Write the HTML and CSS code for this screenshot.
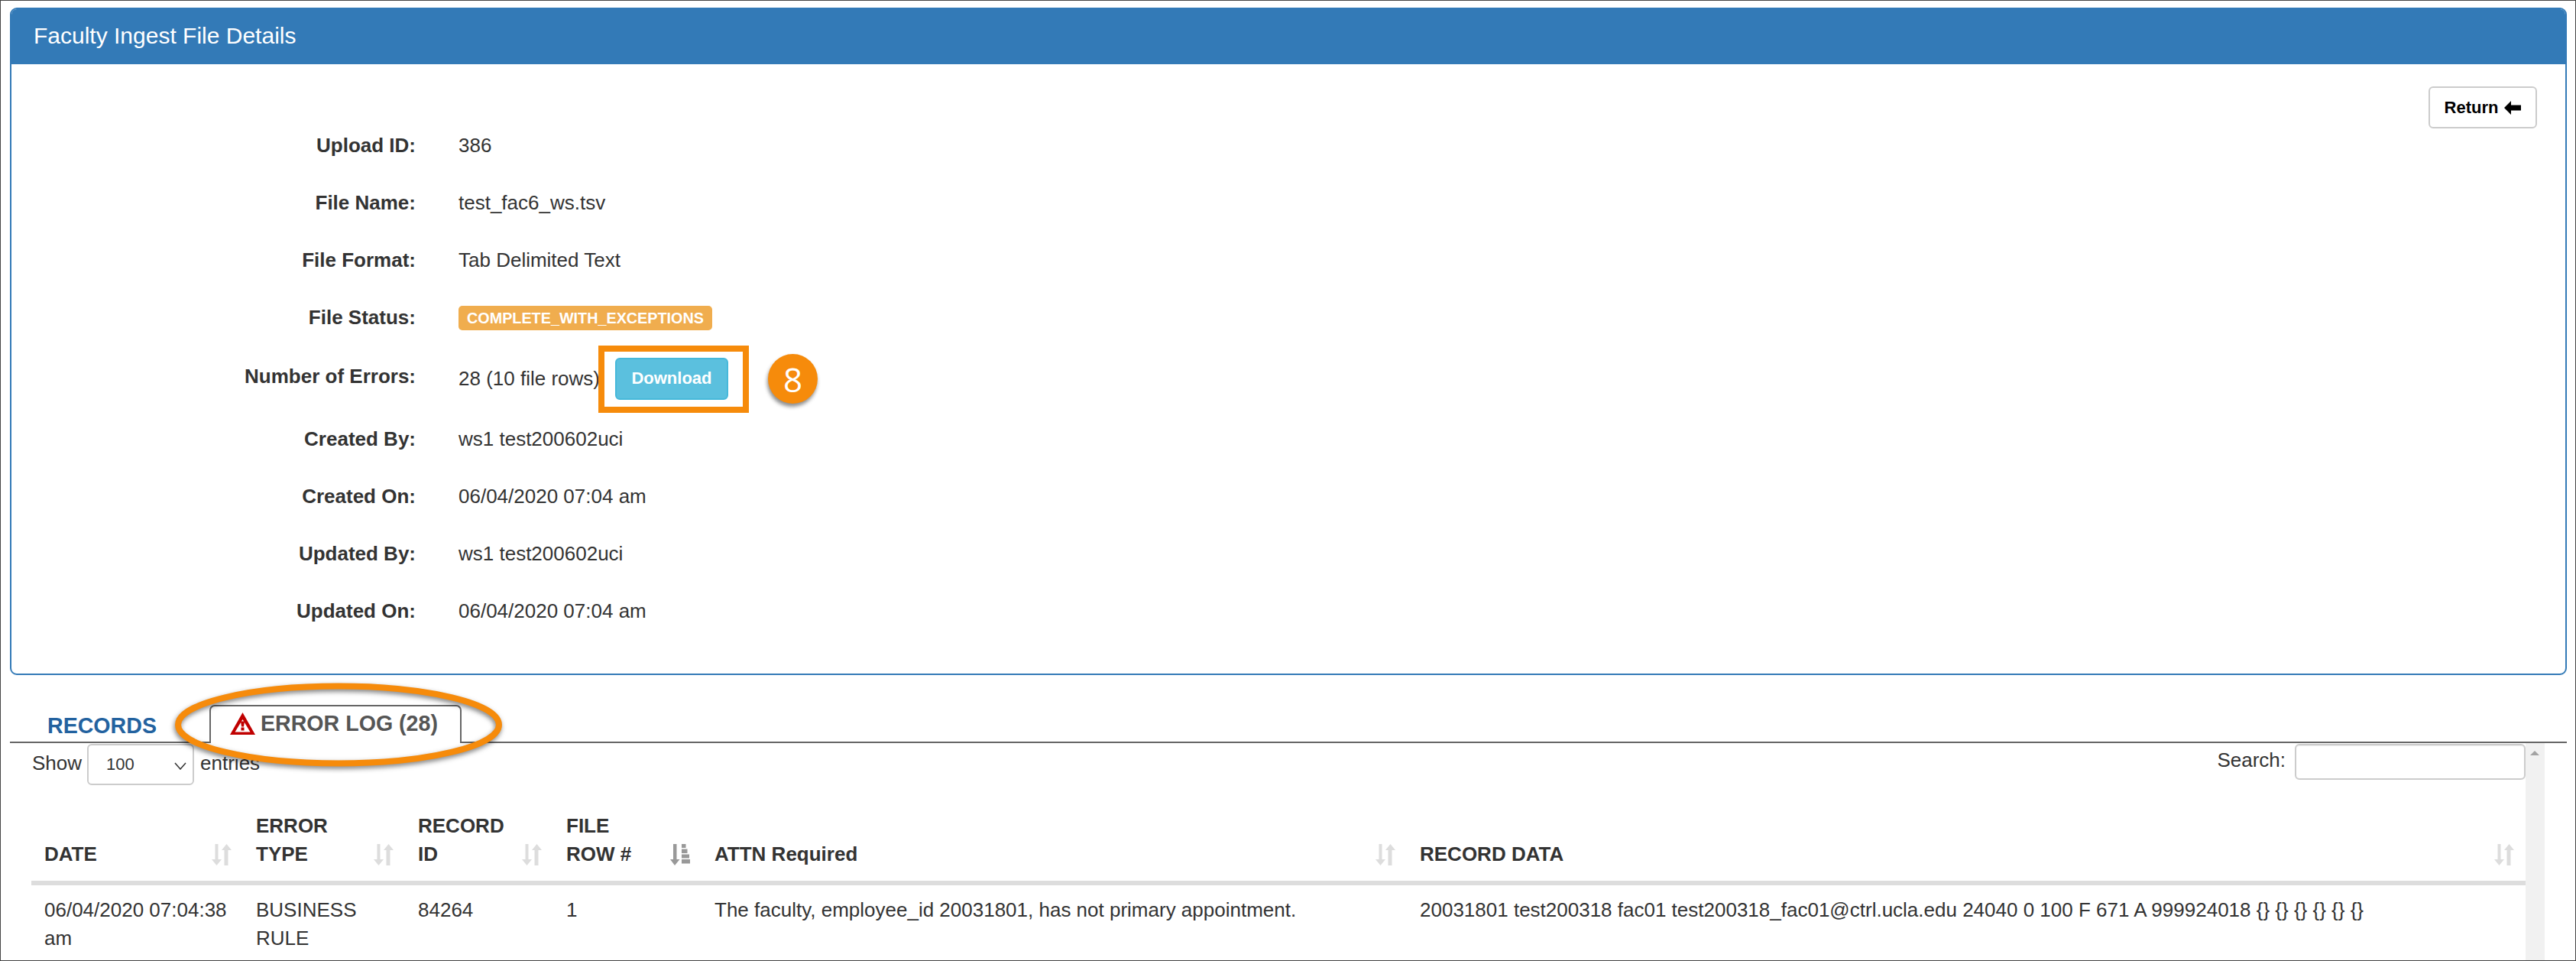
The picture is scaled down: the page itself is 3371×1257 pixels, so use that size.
FILE: index.html
```html
<!DOCTYPE html>
<html lang="en">
<head>
<meta charset="utf-8">
<title>Faculty Ingest File Details</title>
<link rel="stylesheet" href="styles.css">
</head>
<body>
<div class="frame">
  <section class="panel">
    <h1 class="panel-heading">Faculty Ingest File Details</h1>
    <div class="panel-body">
      <div class="details">
        <div class="row"><div class="label">Upload ID:</div><div class="value">386</div></div>
        <div class="row"><div class="label">File Name:</div><div class="value">test_fac6_ws.tsv</div></div>
        <div class="row"><div class="label">File Format:</div><div class="value">Tab Delimited Text</div></div>
        <div class="row"><div class="label">File Status:</div><div class="value"><span class="badge">COMPLETE_WITH_EXCEPTIONS</span></div></div>
        <div class="row row-errors"><div class="label label-up">Number of Errors:</div><div class="value value-flex">28 (10 file rows)<button class="btn-download">Download</button></div></div>
        <div class="row"><div class="label">Created By:</div><div class="value">ws1 test200602uci</div></div>
        <div class="row"><div class="label">Created On:</div><div class="value">06/04/2020 07:04 am</div></div>
        <div class="row"><div class="label">Updated By:</div><div class="value">ws1 test200602uci</div></div>
        <div class="row"><div class="label">Updated On:</div><div class="value">06/04/2020 07:04 am</div></div>
      </div>
      <button class="btn-return">Return
        <svg class="arrow" viewBox="0 0 22 18"><path d="M0 9 9 0v5.500h13v7H9V18z"/></svg>
      </button>
    </div>
  </section>

  <nav class="tabs">
    <a class="tab-link">RECORDS</a>
    <a class="tab-active">
      <svg class="warn" viewBox="0 0 33 29"><path d="M16.500 0 33 29H0z" fill="#c00000"/><path d="M16.500 9 26.500 25.500H6.500z" fill="#fff"/><path d="M14 11.500h5l-1 7h-3z" fill="#c00000"/><rect x="14.500" y="19.500" width="4" height="4" fill="#c00000"/></svg>
      ERROR LOG (28)
    </a>
  </nav>

  <div class="lower">
    <div class="content">
      <div class="controls">
        <div class="length">
          <span>Show</span>
          <div class="select"><span>100</span>
            <svg class="chev" viewBox="0 0 16 10"><path d="M1 1l7 8 7-8" fill="none" stroke="#333" stroke-width="1.500"/></svg>
          </div>
          <span>entries</span>
        </div>
        <label class="search">Search:<input class="search-input" type="text"></label>
      </div>
      <table class="grid">
        <colgroup>
          <col class="c1"><col class="c2"><col class="c3"><col class="c4"><col class="c5"><col class="c6">
        </colgroup>
        <thead>
          <tr>
            <th><div class="th"><span>DATE</span><svg class="sort" viewBox="0 0 26 28"><path d="M4.500 0h4v20H13l-6.500 8L0 20h4.500zM19.500 0 26 8h-4.500v20h-5V8H13z"/></svg></div></th>
            <th><div class="th"><span>ERROR<br>TYPE</span><svg class="sort" viewBox="0 0 26 28"><path d="M4.500 0h4v20H13l-6.500 8L0 20h4.500zM19.500 0 26 8h-4.500v20h-5V8H13z"/></svg></div></th>
            <th><div class="th"><span>RECORD<br>ID</span><svg class="sort" viewBox="0 0 26 28"><path d="M4.500 0h4v20H13l-6.500 8L0 20h4.500zM19.500 0 26 8h-4.500v20h-5V8H13z"/></svg></div></th>
            <th><div class="th"><span>FILE<br>ROW #</span><svg class="sort sort-on" viewBox="0 0 26 28"><path d="M4 0h4.500v20H12.500l-6.500 8L0 20h4zM15 0h5.500v5H15zM15 6.500h7.500V12H15zM15 13.500h10V18.500H15zM15 20h12v5.500H15z"/></svg></div></th>
            <th><div class="th"><span>ATTN Required</span><svg class="sort" viewBox="0 0 26 28"><path d="M4.500 0h4v20H13l-6.500 8L0 20h4.500zM19.500 0 26 8h-4.500v20h-5V8H13z"/></svg></div></th>
            <th><div class="th"><span>RECORD DATA</span><svg class="sort" viewBox="0 0 26 28"><path d="M4.500 0h4v20H13l-6.500 8L0 20h4.500zM19.500 0 26 8h-4.500v20h-5V8H13z"/></svg></div></th>
          </tr>
        </thead>
        <tbody>
          <tr>
            <td>06/04/2020 07:04:38 am</td>
            <td>BUSINESS RULE</td>
            <td>84264</td>
            <td>1</td>
            <td>The faculty, employee_id 20031801, has not primary appointment.</td>
            <td>20031801 test200318 fac01 test200318_fac01@ctrl.ucla.edu 24040 0 100 F 671 A 999924018 {} {} {} {} {} {}</td>
          </tr>
        </tbody>
      </table>
    </div>
    <div class="scrollbar"><span class="scroll-up"></span></div>
  </div>

  <div class="note-box"></div>
  <div class="note-num">8</div>
  <svg class="note-ring" viewBox="0 0 450 130"><ellipse cx="225" cy="60" rx="210" ry="50.500" fill="none" stroke="#f68b0b" stroke-width="8"/></svg>
</div>
</body>
</html>
```

FILE: styles.css
```css
* { box-sizing: border-box; }
html, body { margin: 0; padding: 0; }
body {
  font-family: "Liberation Sans", Arial, sans-serif;
  font-size: 26px;
  color: #333;
  background: #fff;
}
.frame {
  position: relative;
  width: 3371px;
  height: 1257px;
  overflow: hidden;
  border: 1px solid #444;
  padding: 9px 11px 0 12px;
}
.panel {
  border: 2px solid #337ab7;
  border-radius: 9px;
  height: 873px;
  overflow: hidden;
}
.panel-heading {
  margin: -2px -2px 0;
  height: 74px;
  padding-left: 31px;
  display: flex;
  align-items: center;
  background: #337ab7;
  color: #fff;
  font-size: 30px;
  font-weight: 400;
}
.panel-body {
  display: flex;
  justify-content: space-between;
  align-items: flex-start;
  padding: 29px 37px 0 0;
}
.details { padding-top: 40px; }
.row {
  display: flex;
  align-items: center;
  height: 75px;
}
.row-errors { height: 84px; }
.label {
  width: 529px;
  text-align: right;
  font-weight: 700;
  margin-right: 56px;
}
.label-up { margin-bottom: 6px; }
.value-flex { display: flex; align-items: center; }
.badge {
  display: inline-block;
  background: #f0ad4e;
  color: #fff;
  font-size: 19.800px;
  font-weight: 700;
  line-height: 32px;
  height: 32px;
  padding: 0 11px;
  border-radius: 5px;
}
.btn-download {
  width: 148px;
  height: 55px;
  margin-left: 20px;
  padding: 0;
  background: #5bc0de;
  border: 2px solid #46b8da;
  border-radius: 6px;
  color: #fff;
  font: 700 22px "Liberation Sans", Arial, sans-serif;
}
.btn-return {
  display: flex;
  align-items: center;
  justify-content: center;
  gap: 8px;
  width: 142px;
  height: 55px;
  padding: 0;
  background: #fff;
  border: 2px solid #ccc;
  border-radius: 6px;
  color: #000;
  font: 700 22px "Liberation Sans", Arial, sans-serif;
}
.arrow { width: 22px; height: 18px; fill: #000; }

.tabs {
  display: flex;
  height: 50px;
  margin-top: 39px;
  border-bottom: 2px solid #666;
  font-size: 28.600px;
  font-weight: 700;
}
.tab-link {
  padding-left: 49px;
  margin-right: 69px;
  padding-top: 11px;
  color: #23629f;
}
.tab-active {
  display: flex;
  align-items: center;
  gap: 7px;
  width: 330px;
  height: 50px;
  padding: 0 0 4px 25px;
  background: #fff;
  border: 2px solid #666;
  border-bottom: 0;
  border-radius: 7px 7px 0 0;
  color: #555;
}
.warn { width: 33px; height: 29px; }

.lower {
  display: flex;
  height: 286px;
  padding-left: 28px;
}
.content { width: 3264px; }
.scrollbar {
  position: relative;
  width: 25px;
  background: #f1f1f1;
}
.scroll-up {
  display: block;
  width: 0;
  margin: 10px 0 0 6px;
  border-left: 6.500px solid transparent;
  border-right: 6.500px solid transparent;
  border-bottom: 6px solid #a3a3a3;
}
.controls {
  display: flex;
  justify-content: space-between;
  align-items: flex-start;
  height: 74px;
  padding-top: 1px;
}
.length {
  display: flex;
  align-items: center;
  height: 54px;
  padding-left: 1px;
}
.length > span { position: relative; bottom: 2px; }
.select {
  display: flex;
  align-items: center;
  justify-content: space-between;
  width: 140px;
  height: 54px;
  margin: 0 8px 0 7px;
  padding: 0 8px 0 23px;
  border: 2px solid #ccc;
  border-radius: 6px;
  font-size: 22px;
}
.chev { width: 16px; height: 10px; margin-top: 4px; }
.search {
  display: flex;
  align-items: flex-start;
  gap: 12px;
  line-height: 42px;
}
.search-input {
  width: 302px;
  height: 47px;
  border: 2px solid #ccc;
  border-radius: 6px;
  background: #fff;
  box-shadow: inset 0 1px 1px rgba(0, 0, 0, .075);
}
.grid {
  width: 3264px;
  table-layout: fixed;
  border-collapse: collapse;
}
.c1 { width: 277px; }
.c2 { width: 212px; }
.c3 { width: 194px; }
.c4 { width: 194px; }
.c5 { width: 923px; }
.c6 { width: 1464px; }
.grid th {
  padding: 16px 15px 16px 17px;
  border-bottom: 6px solid #ddd;
  text-align: left;
  vertical-align: bottom;
  font-weight: 700;
  line-height: 37px;
}
.grid td {
  padding: 14px 15px 0 17px;
  vertical-align: top;
  line-height: 37px;
}
.th {
  display: flex;
  justify-content: space-between;
  align-items: flex-end;
}
.sort {
  flex: none;
  width: 26px;
  height: 28px;
  margin-bottom: 4px;
  fill: #ddd;
}
.sort-on { fill: #999; }

.note-box {
  position: absolute;
  left: 782px;
  top: 451px;
  width: 197px;
  height: 88px;
  border: 8px solid #f68b0b;
}
.note-num {
  position: absolute;
  left: 1004px;
  top: 462px;
  width: 65px;
  height: 65px;
  display: flex;
  align-items: center;
  justify-content: center;
  border-radius: 50%;
  background: #f68b0b;
  color: #fff;
  font-family: "Open Sans", sans-serif;
  font-size: 44px;
  box-shadow: -1px 4px 5px rgba(0, 0, 0, .45);
}
.note-ring {
  position: absolute;
  left: 217px;
  top: 887px;
  width: 450px;
  height: 130px;
  overflow: visible;
  filter: drop-shadow(-1px 3px 3px rgba(0, 0, 0, .5));
}
```
